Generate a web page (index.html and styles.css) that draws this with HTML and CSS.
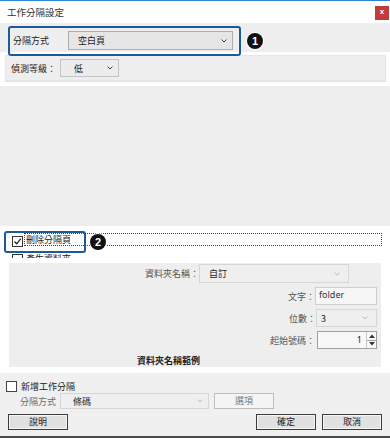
FILE: index.html
```html
<!DOCTYPE html>
<html lang="zh-Hant">

<head>
    <meta charset="UTF-8">
    <meta name="viewport" content="width=device-width, initial-scale=1.0">
    <title>工作分隔設定</title>

    <link rel="stylesheet" href="styles.css">
</head>

<body>
    <div class="dialog">
        <div class="titlebar">
            <span class="title">工作分隔設定</span>
            <span class="close">x</span>
        </div>

        <!-- 分隔方式 -->
        <div class="band">
            <span class="band-label">分隔方式</span>
            <div class="select sel-type">
                <span>空白頁</span>
                <svg class="chev" viewBox="0 0 6 4" width="6" height="4"><path d="M0.5 0.5L3 3L5.5 0.5" /></svg>
            </div>
        </div>

        <div class="level">
            <span class="level-label">偵測等級：</span>
            <div class="select sel-level">
                <span>低</span>
                <svg class="chev" viewBox="0 0 6 4" width="6" height="4"><path d="M0.5 0.5L3 3L5.5 0.5" /></svg>
            </div>
        </div>

        <div class="preview"></div>

        <div class="main">
            <div class="check-row">
                <span class="checkbox">
                    <svg viewBox="0 0 9 9" width="9" height="9"><path d="M1.5 4.5L3.7 6.8L7.8 1.6" /></svg>
                </span>
                <span class="focus">刪除分隔頁</span>
            </div>

            <div class="check-row clipped">
                <span class="checkbox"></span>
                <span class="plain">產生資料夾</span>
            </div>

            <div class="folder-panel">
                <div class="field-row name-row">
                    <span class="field-label">資料夾名稱：</span>
                    <div class="select sel-name off">
                        <span>自訂</span>
                        <svg class="chev" viewBox="0 0 6 4" width="6" height="4"><path d="M0.5 0.5L3 3L5.5 0.5" /></svg>
                    </div>
                </div>
                <div class="field-row">
                    <span class="field-label">文字：</span>
                    <div class="textbox">folder</div>
                </div>
                <div class="field-row">
                    <span class="field-label">位數：</span>
                    <div class="select sel-small off">
                        <span>3</span>
                        <svg class="chev" viewBox="0 0 6 4" width="6" height="4"><path d="M0.5 0.5L3 3L5.5 0.5" /></svg>
                    </div>
                </div>
                <div class="field-row">
                    <span class="field-label">起始號碼：</span>
                    <div class="spinner">
                        <span class="spin-value">1</span>
                        <span class="spin-btns">
                            <span class="spin-btn"><svg viewBox="0 0 6 4" width="6" height="4"><path d="M0 4L3 0.5L6 4Z" /></svg></span>
                            <span class="spin-btn"><svg viewBox="0 0 6 4" width="6" height="4"><path d="M0 0L3 3.5L6 0Z" /></svg></span>
                        </span>
                    </div>
                </div>
                <div class="sample">資料夾名稱範例</div>
            </div>
        </div>

        <div class="footer">
            <div class="foot-check">
                <span class="checkbox"></span>
                <span>新增工作分隔</span>
            </div>
            <div class="foot-type">
                <span class="foot-label">分隔方式</span>
                <div class="select sel-foot off">
                    <span>條碼</span>
                    <svg class="chev" viewBox="0 0 6 4" width="6" height="4"><path d="M0.5 0.5L3 3L5.5 0.5" /></svg>
                </div>
                <span class="btn btn-off">選項</span>
            </div>
            <div class="foot-buttons">
                <span class="btn">說明</span>
                <span class="spacer"></span>
                <span class="btn">確定</span>
                <span class="btn">取消</span>
            </div>
        </div>

        <!-- 標註 -->
        <div class="mark mark-1"></div>
        <span class="badge badge-1">1</span>
        <div class="mark mark-2"></div>
        <span class="badge badge-2">2</span>
    </div>
</body>

</html>
```

FILE: styles.css
```css
* {
    margin: 0;
    padding: 0;
    box-sizing: border-box;
}

body {
    width: 390px;
    height: 438px;
    overflow: hidden;
    background: #fff;
    font-family: "Noto Sans CJK TC", "Noto Sans", sans-serif;
    font-size: 9px;
    color: #222;
}

.dialog {
    position: relative;
    height: 438px;
    border-top: 1px solid #2f86d3;
    border-bottom: 2px solid #4a4a4a;
    display: flex;
    flex-direction: column;
}

.titlebar {
    height: 22px;
    padding: 0 1px 0 7px;
    display: flex;
    justify-content: space-between;
    align-items: center;
}

.title {
    color: #333;
    font-size: 9.5px;
}

.close {
    width: 14px;
    height: 14px;
    margin-top: 1px;
    background: #c3393c;
    color: #fff;
    font-family: "Liberation Sans", sans-serif;
    font-size: 8px;
    font-weight: bold;
    line-height: 12px;
    text-align: center;
}

/* 下拉選單 */
.select {
    display: flex;
    align-items: center;
    justify-content: space-between;
    border: 1px solid #adadad;
    background: #e6e6e6;
    color: #222;
}

.chev {
    fill: none;
    stroke: #444;
    stroke-width: 1;
}

.select.off {
    border-color: #d6d6d6;
    background: #efefef;
}

.select.off .chev {
    stroke: #bbb;
}

.band {
    height: 29px;
    padding: 8px 0 0 13px;
    background: #eeeeee;
    display: flex;
    align-items: flex-start;
}

.band-label {
    width: 55px;
    line-height: 19px;
}

.sel-type {
    width: 165px;
    height: 19px;
    padding: 0 5px 0 9px;
}

.level {
    height: 26px;
    margin: 3px 4px 0 5px;
    padding-left: 5px;
    background: #eeeeee;
    border: 1px solid #e6e6e6;
    box-shadow: 0 1px 1px rgba(0, 0, 0, 0.1);
    display: flex;
    align-items: center;
}

.level-label {
    width: 49px;
}

.sel-level {
    width: 59px;
    height: 18px;
    padding: 0 5px 0 13px;
    border-color: #c4c4c4;
    background: #ececec;
}

.preview {
    height: 140px;
    margin-top: 5px;
    background: #eeeeee;
}

/* 主要選項 */
.main {
    padding-bottom: 6px;
}

.check-row {
    height: 13px;
    margin-top: 7px;
    padding: 0 8px 0 12px;
    display: flex;
    align-items: flex-start;
}

.checkbox {
    width: 11px;
    height: 11px;
    margin-top: 3px;
    border: 1px solid #333;
    background: #fff;
    display: flex;
    justify-content: center;
    align-items: center;
}

.checkbox svg {
    fill: none;
    stroke: #222;
    stroke-width: 1.3;
}

.focus {
    flex: 1;
    height: 13px;
    margin-left: 1px;
    padding-left: 1px;
    border: 1px dotted #444;
    line-height: 11px;
}

.check-row.clipped {
    height: 6px;
    margin-top: 6px;
    overflow: hidden;
}

.clipped .checkbox {
    margin-top: 2px;
}

.plain {
    margin-left: 3px;
    line-height: 13px;
}

.folder-panel {
    height: 104px;
    margin: 5px 9px 0 9px;
    padding-top: 1px;
    background: #eeeeee;
    display: flex;
    flex-direction: column;
    gap: 4px;
}

.field-row {
    padding-right: 4px;
    display: flex;
    justify-content: flex-end;
    align-items: center;
}

.field-row.name-row {
    padding-right: 32px;
}

.field-label {
    color: #555;
}

.sel-name {
    width: 150px;
    height: 19px;
    padding: 0 8px 0 9px;
}

.sel-small {
    width: 61px;
    height: 18px;
    padding: 0 8px 0 4px;
}

.textbox {
    width: 62px;
    height: 18px;
    padding: 1px 0 0 3px;
    border: 1px solid #cfcfcf;
    background: #f6f6f6;
    font-family: "Noto Sans", sans-serif;
    font-size: 9px;
    line-height: 11px;
    color: #333;
}

.spinner {
    width: 60px;
    height: 18px;
    margin-left: 2px;
    border: 1px solid #9f9f9f;
    background: #f8f8f8;
    display: flex;
}

.spin-value {
    flex: 1;
    padding-right: 4px;
    text-align: right;
    line-height: 16px;
    font-family: "Noto Sans", sans-serif;
}

.spin-btns {
    width: 10px;
    border-left: 1px solid #c8c8c8;
    display: flex;
    flex-direction: column;
}

.spin-btn {
    flex: 1;
    display: flex;
    justify-content: center;
    align-items: center;
}

.spin-btn + .spin-btn {
    border-top: 1px solid #9f9f9f;
}

.spin-btn svg {
    fill: #333;
}

.sample {
    margin-top: 1px;
    padding-left: 128px;
    font-weight: bold;
    color: #222;
}

/* 下方區域 */
.footer {
    flex: 1;
    padding: 7px 8px 0 6px;
    background: #f0f0f0;
    display: flex;
    flex-direction: column;
}

.foot-check {
    height: 12px;
    display: flex;
    align-items: center;
    gap: 4px;
}

.foot-check .checkbox {
    margin-top: 0;
    border-color: #444;
}

.foot-type {
    height: 16px;
    margin-top: 1px;
    padding-left: 14px;
    display: flex;
    align-items: center;
}

.foot-label {
    width: 40px;
    color: #6a6a6a;
}

.sel-foot {
    width: 149px;
    height: 16px;
    padding: 0 5px 0 12px;
    background: #f4f4f4;
}

.btn {
    width: 60px;
    height: 16px;
    border: 1px solid #3c3c3c;
    box-shadow: inset 0 0 0 1px #f6f6f6;
    background: #e1e1e1;
    text-align: center;
    line-height: 14px;
    color: #222;
}

.btn.btn-off {
    margin-left: 5px;
    border-color: #bdbdbd;
    background: #f4f4f4;
    color: #777;
}

.foot-buttons {
    height: 16px;
    margin-top: 5px;
    padding-left: 2px;
    display: flex;
    gap: 6px;
}

.spacer {
    flex: 1;
}

/* 標註 */
.mark {
    position: absolute;
    border: 2px solid #1d5a9a;
    border-radius: 3px;
}

.mark-1 {
    left: 8px;
    top: 25px;
    width: 233px;
    height: 30px;
}

.mark-2 {
    left: 4px;
    top: 230px;
    width: 82px;
    height: 22px;
}

.badge {
    position: absolute;
    width: 16px;
    height: 16px;
    border-radius: 50%;
    background: #111;
    box-shadow: 0 0 0 1px #fff;
    color: #fff;
    font-family: "Liberation Sans", sans-serif;
    font-size: 11px;
    font-weight: bold;
    line-height: 16px;
    text-align: center;
}

.badge-1 {
    left: 247px;
    top: 32px;
}

.badge-2 {
    left: 90px;
    top: 233px;
}
```
